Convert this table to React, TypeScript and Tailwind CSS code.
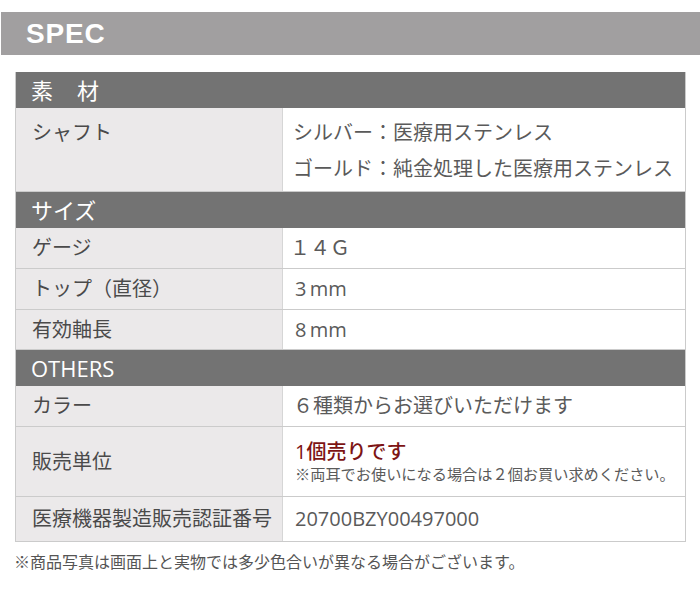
import React from "react";

const font = { fontFamily: '"Open Sans", "Noto Sans CJK JP", sans-serif' };

function Header({ children }: { children: React.ReactNode }) {
  return (
    <div className="h-[36px] bg-[#737373] text-white text-[22px] leading-[36px] pl-[15px] flex items-center">
      {children}
    </div>
  );
}

function Row({
  label,
  children,
  h,
}: {
  label: React.ReactNode;
  children: React.ReactNode;
  h?: string;
}) {
  return (
    <div className={`flex border-b border-[#cbcbcb] ${h ?? ""}`}>
      <div className="w-[267px] shrink-0 bg-[#ebe9ea] border-r border-[#d6d6d6] pl-[16px] text-[#4a4a4a] text-[20px] flex items-center">
        {label}
      </div>
      <div className="flex-1 bg-white pl-[10px] text-[#5a5a5a] text-[20px] flex flex-col justify-center">
        {children}
      </div>
    </div>
  );
}

export default function App() {
  return (
    <div className="w-[700px] h-[590px] bg-white" style={font}>
      <div className="pt-[12px]">
        <div className="h-[43px] ml-[1px] flex items-center pl-[25px] bg-[#a19fa0]">
          <span
            className="text-white text-[28px] font-bold tracking-[0.8px]"
            style={{ fontFamily: '"Liberation Sans", Arial, sans-serif' }}
          >
            SPEC
          </span>
        </div>
      </div>

      <div className="mt-[17px] ml-[15px] w-[671px] border-l border-r border-[#cbcbcb]">
        <Header>
          <span>素</span>
          <span className="ml-[24px]">材</span>
        </Header>
        <div className="flex border-b border-[#cbcbcb] h-[84px]">
          <div className="w-[267px] shrink-0 bg-[#ebe9ea] border-r border-[#d6d6d6] pl-[16px] pt-[7px] text-[#4a4a4a] text-[20px] leading-[36px]">
            シャフト
          </div>
          <div className="flex-1 bg-white pl-[10px] pt-[7px] text-[#5a5a5a] text-[20px] leading-[36px]">
            <div>シルバー：医療用ステンレス</div>
            <div>ゴールド：純金処理した医療用ステンレス</div>
          </div>
        </div>

        <Header>サイズ</Header>
        <Row label="ゲージ" h="h-[41px]">
          <div className="-ml-[3px]">１４Ｇ</div>
        </Row>
        <Row label="トップ（直径）" h="h-[41px]">
          <div className="ml-[2px]">3&#8201;mm</div>
        </Row>
        <Row label="有効軸長" h="h-[40px]">
          <div className="ml-[2px]">8&#8201;mm</div>
        </Row>

        <Header>OTHERS</Header>
        <Row label="カラー" h="h-[41px]">
          <div>６種類からお選びいただけます</div>
        </Row>
        <Row label="販売単位" h="h-[70px]">
          <div className="text-[#7d1414] font-medium leading-[24px] ml-[2px]">1個売りです</div>
          <div className="text-[15.2px] leading-[20px] text-[#5a5a5a] ml-[2px]">
            ※両耳でお使いになる場合は２個お買い求めください。
          </div>
        </Row>
        <Row label="医療機器製造販売認証番号" h="h-[45px]">
          <div className="ml-[2px]">20700BZY00497000</div>
        </Row>
      </div>

      <div className="mt-[8px] ml-[14px] text-[16px] text-[#555555]">
        ※商品写真は画面上と実物では多少色合いが異なる場合がございます。
      </div>
    </div>
  );
}
